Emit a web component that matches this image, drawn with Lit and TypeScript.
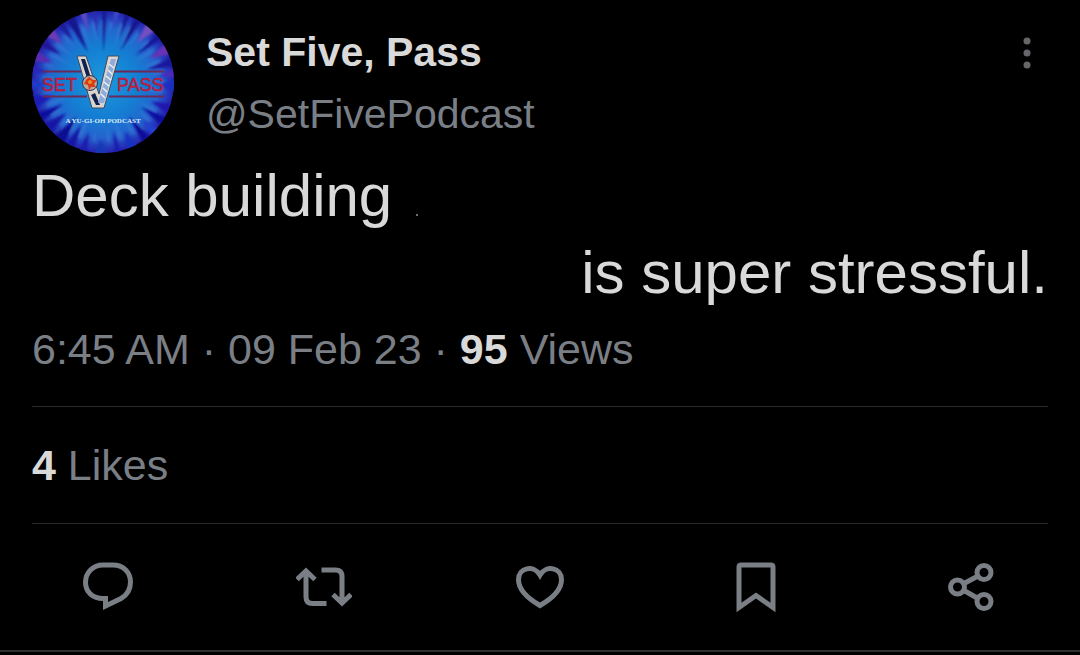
import { LitElement, css, html, svg } from "lit";
import { customElement } from "lit/decorators.js";

// Rays of the avatar's burst: angle, inner radius, half width in degrees, colour.
const RAYS: [number, number, number, string][] = [
  [3, 56, 6, "#1c2fc0"], [22, 52, 5, "#2418b0"], [33, 46, 4, "#1010a0"],
  [44, 54, 4, "#2440cf"], [53, 43, 4, "#100f9a"], [66, 54, 5, "#1730c0"], [78, 50, 3, "#1a1fae"],
  [92, 58, 6, "#1438b4"], [106, 52, 4, "#1a1fae"], [117, 48, 4, "#1216a4"], [127, 44, 5, "#0d0c92"],
  [140, 48, 5, "#1414a4"], [151, 46, 4, "#1010a0"], [164, 52, 6, "#1d1fb6"], [178, 58, 5, "#2038c8"],
  [190, 56, 4, "#2a25b8"], [201, 54, 5, "#5a2cb0"], [213, 50, 4, "#24189a"], [223, 56, 5, "#6a3ab4"],
  [234, 50, 3, "#1c1a98"], [243, 34, 4, "#121790"], [254, 52, 3, "#5a4cc0"], [263, 46, 2, "#2c2cae"],
  [271, 30, 2, "#141b92"], [281, 54, 3, "#3a46c4"], [290, 46, 2, "#14188e"], [299, 36, 3, "#14148e"],
  [311, 52, 5, "#7450c0"], [321, 42, 3, "#18189c"], [333, 52, 5, "#6a30b4"], [344, 46, 4, "#1a149c"],
  [353, 56, 4, "#4a2cbc"],
];

const point = (angle: number, radius: number) => {
  const a = (angle * Math.PI) / 180;
  return `${(71 + radius * Math.cos(a)).toFixed(1)},${(71 + radius * Math.sin(a)).toFixed(1)}`;
};

const avatar = html`
  <svg class="avatar" viewBox="0 0 142 142" role="img" aria-label="Set Five, Pass">
    <defs>
      <radialGradient id="burst">
        <stop offset="0" stop-color="#1c9ade" />
        <stop offset="0.5" stop-color="#147ed2" />
        <stop offset="0.78" stop-color="#2464ce" />
        <stop offset="1" stop-color="#2622b0" />
      </radialGradient>
      <clipPath id="disc"><circle cx="71" cy="71" r="71" /></clipPath>
      <filter id="soft"><feGaussianBlur stdDeviation="1.200" /></filter>
    </defs>
    <g clip-path="url(#disc)">
      <rect width="142" height="142" fill="url(#burst)" />
      <g filter="url(#soft)">
        ${RAYS.map(([a, r, w, c], i) => svg`
          <polygon points="${point(a, r)} ${point(a - w, 76)} ${point(a + w, 76)}" fill=${c} />
          <polygon points="${point(a + 7, 34 + (i % 4) * 5)} ${point(a + 5, 62)} ${point(a + 8, 60)}" fill="#5c9ae6" opacity="0.3" />`)}
      </g>
    </g>
    <path d="M11 60.500H50M80 60.500H132M11 85.500H55M77 85.500H132" stroke="#6b2858" stroke-width="2" />
    <text class="logo" x="10" y="80">SET</text>
    <text class="logo" x="85" y="80">PASS</text>
    <path d="M45 45H54L67 83L76 45H87L72 97H60Z" fill="#d9d4cc" stroke="#3a4868" stroke-width="1" />
    <path d="M49 48H53L59 67H55ZM59 84L64 94H68L63 82Z" fill="#10204e" />
    <path d="M79 48H84L72 92H66Z" fill="#8eabdc" />
    <path d="M77 53L82 57M76 59L80 63M74 65L79 69M72 71L77 75M71 77L75 81M69 83L73 87" stroke="#f1f2f2" stroke-width="1.500" />
    <circle cx="58" cy="72" r="7.500" fill="#b9aa9d" stroke="#383450" stroke-width="1" />
    <path d="M54 69L57 66L61 69L65 69L62 73L64 76L59 76L57 79L56 74L52 73Z" fill="#d93c14" />
    <circle cx="58" cy="71" r="2" fill="#f18a28" />
    <text class="tagline" x="71" y="112" text-anchor="middle">A YU-GI-OH PODCAST</text>
  </svg>`;

const ACTIONS = [
  {
    label: "Reply",
    icon: svg`<path d="M23 6H33C43 6 50.500 13 50.500 23C50.500 31 47 36 41 39.500L25.500 47V39.500H23C13 39.500 5.500 33 5.500 23.500C5.500 13.500 13 6 23 6Z" />`,
  },
  {
    label: "Retweet",
    icon: svg`<path d="M1 20.500L10 12L19 20.500M10 13V38Q10 44.500 16.500 44.500H30.500M25.500 11H39.500Q46 11 46 17.500V43M37 35.500L46 44L55 35.500" />`,
  },
  {
    label: "Like",
    icon: svg`<path d="M28 46.500C15 39 6.500 29.500 6.500 20.500C6.500 9 21.500 5 28 16C34.500 5 49.500 9 49.500 20.500C49.500 29.500 41 39 28 46.500Z" />`,
  },
  {
    label: "Bookmark",
    icon: svg`<path d="M13 6H43Q45 6 45 8V48.500L28 36.500L11 48.500V8Q11 6 13 6Z" />`,
  },
  {
    label: "Share",
    icon: svg`<path d="M20 24.500L34 17M20 31.500L34 39.500" /><circle cx="13.500" cy="28" r="7" /><circle cx="40" cy="13.500" r="7" /><circle cx="40" cy="42.500" r="7" />`,
  },
];

@customElement("app-root")
export class AppRoot extends LitElement {
  static styles = css`
    :host {
      display: block;
      min-height: 100vh;
      background: #000;
      color: #d9d9d9;
      font-family: "Liberation Sans", Arial, sans-serif;
      font-size: 41px;
      line-height: 48px;
    }
    .tweet {
      padding: 11px 32px 0;
      border-bottom: 2px solid #303032;
    }
    .header {
      display: flex;
      gap: 32px;
    }
    .avatar {
      width: 142px;
      height: 142px;
      flex: none;
    }
    .logo {
      font: 18px "Liberation Sans", sans-serif;
      fill: #d0203c;
      stroke: #a01838;
      stroke-width: 0.5px;
    }
    .tagline {
      font: bold 7px "Liberation Serif", serif;
      fill: #dbe9f8;
    }
    .author {
      flex: 1;
      display: flex;
      flex-direction: column;
      gap: 14px;
      padding-top: 17px;
    }
    .name {
      font-size: 41px;
      line-height: 48px;
      margin: 0;
      font-weight: bold;
    }
    .muted,
    .handle {
      color: #7a7f86;
      text-decoration: none;
    }
    .count {
      color: #d9d9d9;
    }
    button {
      display: flex;
      padding: 0;
      border: 0;
      background: none;
      color: #7a7f86;
      cursor: pointer;
    }
    .more {
      align-self: flex-start;
      margin-top: 22px;
      color: #66676a;
    }
    .more-icon {
      width: 42px;
      height: 40px;
      fill: currentColor;
    }
    .body {
      margin: 4px 0 0;
      font-size: 60px;
      line-height: 77px;
    }
    .line {
      display: block;
    }
    .end {
      text-align: right;
    }
    .speck {
      display: inline-block;
      width: 2px;
      height: 2px;
      margin-left: 24px;
      background: #6d6d6d;
    }
    .meta,
    .likes {
      margin: 0;
      font-size: 43px;
    }
    .meta {
      padding: 14px 0 33px;
    }
    .likes {
      padding: 34px 0;
      border: solid #2a2a2c;
      border-width: 1px 0;
    }
    .actions {
      display: flex;
      justify-content: space-between;
      padding: 35px 48px 33px;
    }
    .icon {
      width: 56px;
      height: 58px;
      fill: none;
      stroke: currentColor;
      stroke-width: 5;
    }
  `;

  render() {
    return html`
      <article class="tweet">
        <header class="header">
          ${avatar}
          <div class="author">
            <h1 class="name">Set Five, Pass</h1>
            <a class="handle" href="#profile">@SetFivePodcast</a>
          </div>
          <button class="more" type="button" aria-label="More">
            <svg class="more-icon" viewBox="0 0 42 40">
              <circle cx="21" cy="8" r="3.500" />
              <circle cx="21" cy="20" r="3.500" />
              <circle cx="21" cy="32" r="3.500" />
            </svg>
          </button>
        </header>
        <p class="body">
          <span class="line">Deck building<span class="speck"></span></span>
          <span class="line end">is super stressful.</span>
        </p>
        <p class="meta muted">6:45 AM · 09 Feb 23 · <b class="count">95</b> Views</p>
        <p class="likes muted"><b class="count">4</b> Likes</p>
        <div class="actions">
          ${ACTIONS.map(({ label, icon }) => html`
            <button type="button" aria-label=${label}>
              <svg class="icon" viewBox="0 0 56 58">${icon}</svg>
            </button>`)}
        </div>
      </article>
    `;
  }
}
